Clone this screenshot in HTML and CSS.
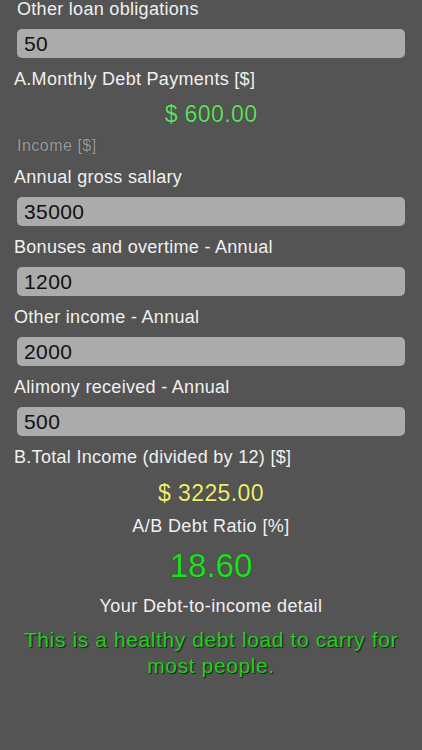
FILE: index.html
```html
<!DOCTYPE html>
<html>
<head>
<meta charset="utf-8">
<link rel="stylesheet" href="styles.css">
</head>
<body>
<div class="page">
  <div class="label label-first">Other loan obligations</div>
  <div class="field">50</div>
  <div class="label label-wide">A.Monthly Debt Payments [$]</div>
  <div class="amount amount-green">$ 600.00</div>
  <div class="section">Income [$]</div>
  <div class="label label-wide">Annual gross sallary</div>
  <div class="field">35000</div>
  <div class="label label-wide">Bonuses and overtime - Annual</div>
  <div class="field">1200</div>
  <div class="label label-wide">Other income - Annual</div>
  <div class="field">2000</div>
  <div class="label label-wide">Alimony received - Annual</div>
  <div class="field">500</div>
  <div class="label label-wide">B.Total Income (divided by 12) [$]</div>
  <div class="amount amount-yellow">$ 3225.00</div>
  <div class="center-label">A/B Debt Ratio [%]</div>
  <div class="ratio">18.60</div>
  <div class="center-label detail">Your Debt-to-income detail</div>
  <div class="message">This is a healthy debt load to carry for most people.</div>
</div>
</body>
</html>
```

FILE: styles.css
```css
html, body {
  margin: 0;
  padding: 0;
  background: #545454;
  height: 100%;
  overflow: hidden;
}

.page {
  display: flex;
  flex-direction: column;
  font-family: "Liberation Sans", Arial, sans-serif;
  color: #f0f0f0;
  padding: 0 17px 0 17px;
}

.label {
  font-size: 18px;
  letter-spacing: 0.3px;
  line-height: 30px;
  height: 30px;
  margin-top: 6px;
  white-space: nowrap;
}

.label-first {
  margin-top: -6px;
}

.label-wide {
  margin-left: -3px;
}

.field {
  margin-top: 5px;
  height: 29px;
  background: #ababab;
  border-radius: 5px;
  color: #111;
  font-size: 21px;
  letter-spacing: 0.4px;
  line-height: 30px;
  padding-left: 7px;
}

.amount {
  text-align: center;
  font-size: 23px;
  letter-spacing: 0.4px;
  line-height: 30px;
  height: 30px;
  margin-top: 5px;
  text-shadow: 0 0 1px #1a3a1a;
}

.amount-green {
  color: #62dc62;
}

.amount-yellow {
  margin-top: 6px;
  color: #eeee70;
  text-shadow: 0 0 1px #3a3a1a;
}

.section {
  color: #9a9a9a;
  font-size: 16px;
  letter-spacing: 0.5px;
  line-height: 20px;
  margin-top: 7px;
  text-shadow: 0 0 1px #333;
}

.center-label {
  text-align: center;
  font-size: 18px;
  letter-spacing: 0.4px;
  line-height: 24px;
  margin-top: 6px;
}

.ratio {
  text-align: center;
  font-size: 33px;
  line-height: 40px;
  margin-top: 8px;
  color: #22dd22;
  text-shadow: 0 0 1px #0a3a0a;
}

.detail {
  margin-top: 8px;
}

.message {
  text-align: center;
  font-size: 21px;
  letter-spacing: 0.6px;
  line-height: 26px;
  margin-top: 9px;
  padding: 0 2px;
  color: #22cc22;
  text-shadow: 1px 1px 1px #1a1a1a;
}
```
